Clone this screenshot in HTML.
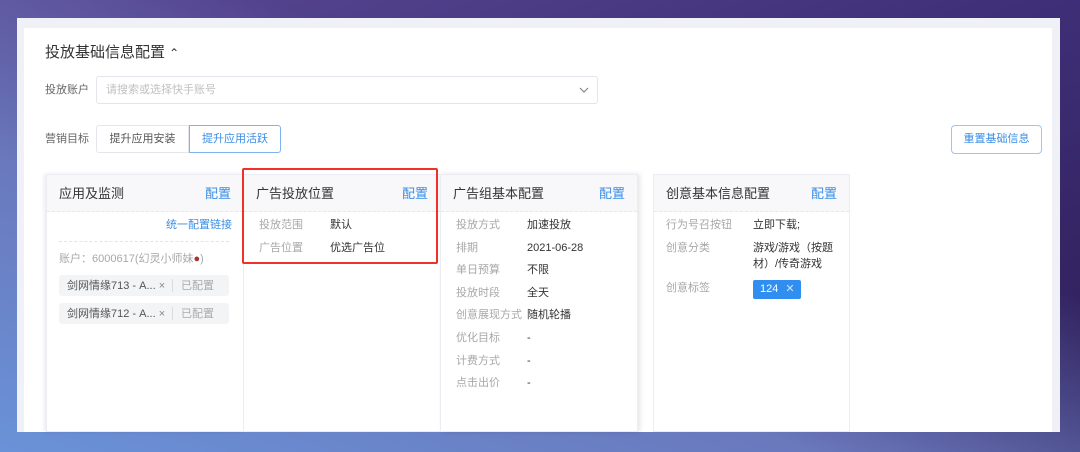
<!DOCTYPE html>
<html><head><meta charset="utf-8"><style>
*{margin:0;padding:0;box-sizing:border-box}
body{width:1080px;height:452px;overflow:hidden;position:relative;font-family:"Liberation Sans","Noto Sans CJK SC",sans-serif;background:linear-gradient(160deg,#5a4893 0%,#3f2f78 45%,#2d1d56 100%);}
.bg2{position:absolute;inset:0;background:linear-gradient(20deg,#6a92d8 0%,#6a78bc 35%,rgba(80,80,160,0) 65%);}
.a{position:absolute;white-space:nowrap;line-height:14px}
.panel{position:absolute;left:17px;top:18px;width:1043px;height:414px;background:#f0f1f6;}
.inner{position:absolute;left:24px;top:28px;width:1028px;height:404px;background:#fff;}
.card{position:absolute;top:174px;height:258px;background:#fff;border:1px solid #ebedf2;}
.hd{position:absolute;left:0;top:0;right:0;height:37px;background:#f8f8fa;border-bottom:1px dashed #e8e8ec;}
.ht{position:absolute;left:12px;top:11px;font-size:13px;line-height:15px;color:#333}
.hc{position:absolute;right:12px;top:11px;font-size:13px;line-height:15px;color:#3a8ee6}
.lb{font-size:11px;color:#a8a8a8}
.vl{font-size:11px;color:#333}
.tag{position:absolute;left:59px;width:170px;height:21px;background:#f3f4f6;border-radius:3px;font-size:11px}
</style></head><body>
<div class="bg2"></div>
<div class="panel"></div>
<div class="inner"></div>
<div class="a" style="left:45px;top:44px;font-size:15px;line-height:17px;color:#333">投放基础信息配置 <span style="font-size:12px">⌃</span></div>
<div class="a lb" style="left:45px;top:83px;color:#666">投放账户</div>
<div class="a" style="left:96px;top:76px;width:502px;height:28px;border:1px solid #e4e6eb;border-radius:3px"></div>
<div class="a" style="left:106px;top:83px;font-size:11px;color:#c0c0c0">请搜索或选择快手账号</div>
<svg class="a" style="left:579px;top:87px" width="10" height="6"><path d="M1 1l4 4 4-4" stroke="#888" fill="none" stroke-width="1.2"/></svg>
<div class="a lb" style="left:45px;top:132px;color:#666">营销目标</div>
<div class="a" style="left:96px;top:125px;width:93px;height:28px;border:1px solid #e4e6eb;border-radius:3px 0 0 3px;font-size:11px;color:#555;text-align:center;line-height:26px">提升应用安装</div>
<div class="a" style="left:189px;top:125px;width:92px;height:28px;border:1px solid #7fb3ee;border-radius:0 3px 3px 0;font-size:11px;color:#3a8ee6;text-align:center;line-height:26px">提升应用活跃</div>
<div class="a" style="left:951px;top:125px;width:91px;height:29px;border:1px solid #9cc5f2;border-radius:4px;font-size:11px;color:#3a8ee6;text-align:center;line-height:27px">重置基础信息</div>

<div class="card" style="left:46px;width:198px;box-shadow:-2px 0 4px rgba(0,0,0,.08)"><div class="hd"><div class="ht">应用及监测</div><div class="hc">配置</div></div></div>
<div class="card" style="left:243px;width:198px"><div class="hd"><div class="ht">广告投放位置</div><div class="hc">配置</div></div></div>
<div class="card" style="left:440px;width:198px;box-shadow:2px 0 5px rgba(0,0,0,.1)"><div class="hd"><div class="ht">广告组基本配置</div><div class="hc">配置</div></div></div>
<div class="card" style="left:653px;width:197px"><div class="hd"><div class="ht">创意基本信息配置</div><div class="hc">配置</div></div></div>

<div class="a" style="left:166px;top:218px;font-size:11px;color:#3a8ee6">统一配置链接</div>
<div class="a" style="left:59px;top:241px;width:170px;border-top:1px dashed #e4e4e8"></div>
<div class="a lb" style="left:59px;top:252px">账户：6000617(幻灵小师妹<span style="color:#a33">●</span>)</div>
<div class="tag" style="top:275px"><span class="a" style="left:8px;top:4px;color:#555">剑网情缘713 - A... <span style="color:#888">×</span></span><span class="a" style="left:113px;top:4px;height:13px;border-left:1px solid #ddd"></span><span class="a" style="left:122px;top:4px;color:#aaa">已配置</span></div>
<div class="tag" style="top:303px"><span class="a" style="left:8px;top:4px;color:#555">剑网情缘712 - A... <span style="color:#888">×</span></span><span class="a" style="left:113px;top:4px;height:13px;border-left:1px solid #ddd"></span><span class="a" style="left:122px;top:4px;color:#aaa">已配置</span></div>

<div class="a lb" style="left:259px;top:218px">投放范围</div><div class="a vl" style="left:330px;top:218px">默认</div>
<div class="a lb" style="left:259px;top:241px">广告位置</div><div class="a vl" style="left:330px;top:241px">优选广告位</div>
<div class="a" style="left:242px;top:168px;width:196px;height:96px;border:2px solid #f0302a;border-radius:2px"></div>

<div class="a lb" style="left:456px;top:218px">投放方式</div><div class="a vl" style="left:527px;top:218px">加速投放</div>
<div class="a lb" style="left:456px;top:241px">排期</div><div class="a vl" style="left:527px;top:241px">2021-06-28</div>
<div class="a lb" style="left:456px;top:263px">单日预算</div><div class="a vl" style="left:527px;top:263px">不限</div>
<div class="a lb" style="left:456px;top:286px">投放时段</div><div class="a vl" style="left:527px;top:286px">全天</div>
<div class="a lb" style="left:456px;top:308px">创意展现方式</div><div class="a vl" style="left:527px;top:308px">随机轮播</div>
<div class="a lb" style="left:456px;top:331px">优化目标</div><div class="a vl" style="left:527px;top:331px">-</div>
<div class="a lb" style="left:456px;top:354px">计费方式</div><div class="a vl" style="left:527px;top:354px">-</div>
<div class="a lb" style="left:456px;top:376px">点击出价</div><div class="a vl" style="left:527px;top:376px">-</div>

<div class="a lb" style="left:666px;top:218px">行为号召按钮</div><div class="a vl" style="left:753px;top:218px">立即下载;</div>
<div class="a lb" style="left:666px;top:241px">创意分类</div><div class="a vl" style="left:753px;top:240px;line-height:16px">游戏/游戏（按题<br>材）/传奇游戏</div>
<div class="a lb" style="left:666px;top:281px">创意标签</div>
<div class="a" style="left:753px;top:280px;width:48px;height:19px;background:#2f8ef0;border-radius:2px;color:#fff;font-size:11px;line-height:19px;padding-left:7px">124 <span style="margin-left:4px;color:#cfe3fb">✕</span></div>
</body></html>
